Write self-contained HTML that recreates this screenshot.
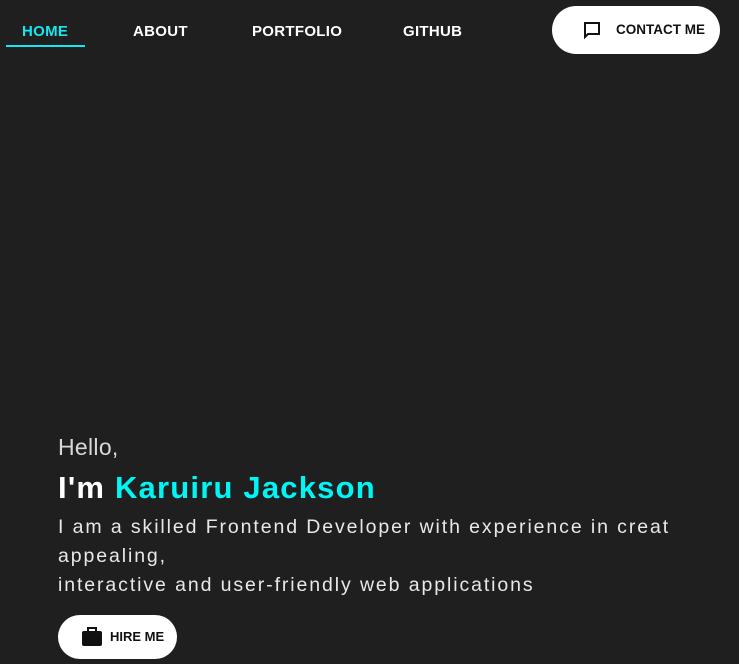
<!DOCTYPE html>
<html><head><style>
body{margin:0;width:739px;height:664px;background:#1f1f1f;overflow:hidden;font-family:"Liberation Sans",sans-serif;position:relative}
.n{position:absolute;top:23px;font-size:15px;font-weight:bold;color:#fff;letter-spacing:0.3px}
.btn{position:absolute;background:#fff;border-radius:26px;color:#111;font-weight:bold;font-size:13px}
</style></head><body>
<div class="n" style="left:22px;color:#16e6ef">HOME</div>
<div style="position:absolute;left:6px;top:45px;width:79px;height:2px;background:#16e6ef"></div>
<div class="n" style="left:133px">ABOUT</div>
<div class="n" style="left:252px">PORTFOLIO</div>
<div class="n" style="left:403px">GITHUB</div>
<div class="btn" style="left:552px;top:6px;width:168px;height:48px">
<svg style="position:absolute;left:31px;top:15px" width="18" height="19" viewBox="0 0 18 19"><path d="M2 2h14v11H5l-3 3z" fill="none" stroke="#111" stroke-width="2"/></svg>
<span style="position:absolute;left:64px;top:16px;font-size:13.5px;letter-spacing:0px">CONTACT ME</span></div>
<div style="position:absolute;left:58px;top:434px;font-size:23px;color:#d8d8d8;letter-spacing:0.3px">Hello,</div>
<div style="position:absolute;left:58px;top:470px;font-size:31px;font-weight:bold;color:#fff;letter-spacing:1.2px">I'm <span style="color:#00f5f5">Karuiru Jackson</span></div>
<div style="position:absolute;left:58px;top:513px;width:612px;overflow:hidden;font-size:19.5px;line-height:29px;color:#e8e8e8;letter-spacing:1.9px">
<div style="white-space:nowrap">I am a skilled Frontend Developer with experience in creating visually</div>
<div>appealing,</div>
<div style="white-space:nowrap">interactive and user-friendly web applications</div></div>
<div class="btn" style="left:58px;top:615px;width:119px;height:44px;border-radius:22px">
<svg style="position:absolute;left:23px;top:11px" width="22" height="21" viewBox="0 0 22 21"><rect x="1" y="5" width="20" height="15" rx="2" fill="#111"/><path d="M7 5V2h8v3" fill="none" stroke="#111" stroke-width="2"/></svg>
<span style="position:absolute;left:52px;top:14px;font-size:13px;letter-spacing:0px">HIRE ME</span></div>
</body></html>
